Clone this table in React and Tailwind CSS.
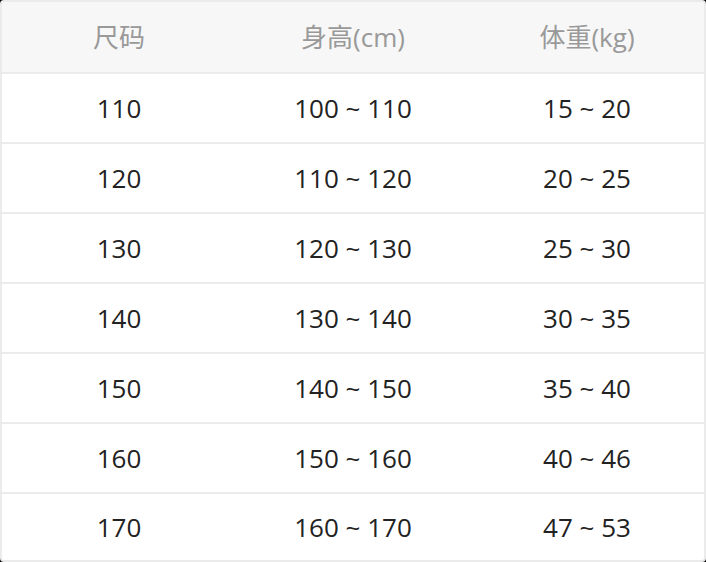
import React from 'react';

const rows = [
  ['110', '100 ~ 110', '15 ~ 20'],
  ['120', '110 ~ 120', '20 ~ 25'],
  ['130', '120 ~ 130', '25 ~ 30'],
  ['140', '130 ~ 140', '30 ~ 35'],
  ['150', '140 ~ 150', '35 ~ 40'],
  ['160', '150 ~ 160', '40 ~ 46'],
  ['170', '160 ~ 170', '47 ~ 53'],
];

const App = () => {
  return (
    <div className="w-[706px] h-[562px] bg-black">
      <div
        className="w-full h-full bg-white border-2 border-[#ebebeb] rounded-[4px] overflow-hidden flex flex-col"
        style={{ fontFamily: '"Open Sans", "Noto Sans CJK SC", sans-serif' }}
      >
        <div className="grid grid-cols-3 h-[72px] shrink-0 bg-[#f7f7f7] border-b-2 border-[#ebebeb] text-[#999999] text-[26px]">
          <div className="flex items-center justify-center">尺码</div>
          <div className="flex items-center justify-center">身高(cm)</div>
          <div className="flex items-center justify-center">体重(kg)</div>
        </div>
        {rows.map((r, i) => (
          <div
            key={r[0]}
            className={`grid grid-cols-3 text-[#222222] text-[26px] ${i < rows.length - 1 ? 'h-[70px] shrink-0 border-b-2 border-[#ebebeb]' : 'flex-1'}`}
          >
            {r.map((c, j) => (
              <div key={j} className="flex items-center justify-center">{c}</div>
            ))}
          </div>
        ))}
      </div>
    </div>
  );
};

export default App;
